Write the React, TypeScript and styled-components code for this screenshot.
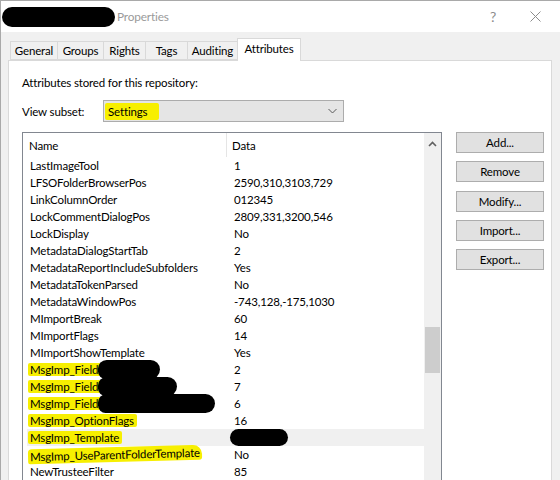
import React from "react";
import styled, { createGlobalStyle } from "styled-components";

const GlobalStyle = createGlobalStyle`
  html, body {
    margin: 0;
    padding: 0;
    background: #f0f0f0;
  }
  body {
    font-family: Lato, "Noto Sans", sans-serif;
    font-size: 11.5px;
    letter-spacing: -0.15px;
    color: #000;
  }
`;

const MARKER = "#f7ef00";

const Window = styled.div`
  width: 560px;
  height: 480px;
  box-sizing: border-box;
  overflow: hidden;
  display: flex;
  flex-direction: column;
  background: #f0f0f0;
  border-top: 1px solid #a9a9a9;
  border-left: 1px solid #a9a9a9;
`;

const TitleBar = styled.div`
  height: 31px;
  flex-shrink: 0;
  display: flex;
  align-items: center;
  background: #fff;
  padding-left: 1px;
`;

const Redact = styled.span<{ $w: number; $h?: number; $r?: string; $shift?: number }>`
  display: inline-block;
  width: ${(p) => p.$w}px;
  height: ${(p) => p.$h ?? 18}px;
  margin-left: ${(p) => p.$shift ?? 0}px;
  background: #000;
  border-radius: ${(p) => p.$r ?? "10px"};
  vertical-align: middle;
  flex-shrink: 0;
`;

const TitleText = styled.span`
  margin-left: 2px;
  font-size: 11.8px;
  color: #9a9a9a;
`;

const TitleButtons = styled.div`
  margin-left: auto;
  display: flex;
  align-items: center;
  gap: 34px;
  padding-right: 19px;
  color: #8c8c8c;
`;

const HelpGlyph = styled.span`
  font-size: 14px;
  color: #8c8c8c;
`;

const Body = styled.div`
  flex: 1;
  display: flex;
  flex-direction: column;
  padding: 6px 8px 0 7px;
  min-height: 0;
`;

const TabStrip = styled.div`
  display: flex;
  align-items: flex-end;
  padding-left: 2px;
  height: 22px;
  position: relative;
  z-index: 1;
`;

const Tab = styled.div<{ $w: number; $active?: boolean }>`
  box-sizing: border-box;
  width: ${(p) => p.$w}px;
  height: ${(p) => (p.$active ? 23 : 19)}px;
  margin-bottom: ${(p) => (p.$active ? -1 : 0)}px;
  display: flex;
  align-items: center;
  justify-content: center;
  padding-bottom: ${(p) => (p.$active ? 3 : 0)}px;
  background: ${(p) => (p.$active ? "#fff" : "#f0f0f0")};
  border: 1px solid #d9d9d9;
  border-bottom: ${(p) => (p.$active ? "none" : "1px solid #d9d9d9")};
  border-right: ${(p) => (p.$active ? "1px solid #d9d9d9" : "none")};
`;

const Panel = styled.div`
  flex: 1;
  background: #fff;
  border: 1px solid #d9d9d9;
  border-bottom: none;
  padding: 13px 0 0 13px;
  display: flex;
  flex-direction: column;
  min-height: 0;
`;

const Caption = styled.div`
  height: 17px;
  line-height: 17px;
`;

const SubsetRow = styled.div`
  display: flex;
  align-items: center;
  margin-top: 9px;
  height: 22px;
`;

const SubsetLabel = styled.span`
  width: 81px;
`;

const Combo = styled.div`
  box-sizing: border-box;
  width: 241px;
  height: 22px;
  display: flex;
  align-items: center;
  padding: 0 6px 0 1px;
  background: #e5e5e5;
  border: 1px solid #acacac;
`;

const Marked = styled.span<{ $slant?: boolean }>`
  background: ${MARKER};
  border-radius: ${(p) => (p.$slant ? "4px 9px 3px 2px" : "2px")};
  padding: ${(p) => (p.$slant ? "1px 2px 1px 2px" : "0 3px 0 2px")};
  margin-left: -2px;
  ${(p) => (p.$slant ? "transform: rotate(-1.5deg); display: inline-block;" : "")}
`;

const ComboValue = styled.span`
  flex: 1;
  span {
    padding: 2px 12px 2px 3px;
    margin-left: 0;
  }
`;

const Content = styled.div`
  display: flex;
  gap: 14px;
  margin-top: 10px;
  flex: 1;
  min-height: 0;
`;

const ListBox = styled.div`
  box-sizing: border-box;
  width: 420px;
  border: 1px solid #828790;
  border-bottom: none;
  display: flex;
  background: #fff;
`;

const ListMain = styled.div`
  flex: 1;
  display: flex;
  flex-direction: column;
`;

const HeaderRow = styled.div`
  display: flex;
  height: 24px;
  align-items: center;
`;

const HeaderCell = styled.div<{ $w?: number }>`
  box-sizing: border-box;
  ${(p) => (p.$w ? `width: ${p.$w}px;` : "flex: 1;")}
  height: 100%;
  display: flex;
  align-items: center;
  padding-left: ${(p) => (p.$w ? 6 : 5)}px;
  border-right: ${(p) => (p.$w ? "1px solid #e5e5e5" : "none")};
`;

const Rows = styled.div`
  padding-left: 4px;
  display: flex;
  flex-direction: column;
`;

const Row = styled.div<{ $selected?: boolean }>`
  display: flex;
  align-items: center;
  height: 17px;
  background: ${(p) => (p.$selected ? "#f0f0f0" : "transparent")};
  white-space: nowrap;
`;

const NameCell = styled.div`
  width: 204px;
  padding-left: 3px;
  display: flex;
  align-items: center;
  overflow: visible;
`;

const DataCell = styled.div`
  flex: 1;
  display: flex;
  align-items: center;
`;

const ScrollBar = styled.div`
  width: 17px;
  background: #f0f0f0;
  display: flex;
  flex-direction: column;
  align-items: center;
`;

const ScrollArrow = styled.div`
  height: 17px;
  display: flex;
  align-items: center;
  justify-content: center;
  margin-top: 2px;
`;

const ScrollThumb = styled.div`
  width: 15px;
  height: 46px;
  background: #cdcdcd;
  margin-top: 175px;
`;

const ButtonColumn = styled.div`
  display: flex;
  flex-direction: column;
  gap: 8.3px;
`;

const Button = styled.div`
  box-sizing: border-box;
  width: 88px;
  height: 21px;
  display: flex;
  align-items: center;
  justify-content: center;
  background: #e1e1e1;
  border: 1px solid #adadad;
`;

type Attr = {
  name: string;
  data?: string;
  mark?: "plain" | "slant";
  nameBlob?: number;
  dataBlob?: number;
  selected?: boolean;
};

const attributes: Attr[] = [
  { name: "LastImageTool", data: "1" },
  { name: "LFSOFolderBrowserPos", data: "2590,310,3103,729" },
  { name: "LinkColumnOrder", data: "012345" },
  { name: "LockCommentDialogPos", data: "2809,331,3200,546" },
  { name: "LockDisplay", data: "No" },
  { name: "MetadataDialogStartTab", data: "2" },
  { name: "MetadataReportIncludeSubfolders", data: "Yes" },
  { name: "MetadataTokenParsed", data: "No" },
  { name: "MetadataWindowPos", data: "-743,128,-175,1030" },
  { name: "MImportBreak", data: "60" },
  { name: "MImportFlags", data: "14" },
  { name: "MImportShowTemplate", data: "Yes" },
  { name: "MsgImp_Field", data: "2", mark: "plain", nameBlob: 62 },
  { name: "MsgImp_Field", data: "7", mark: "plain", nameBlob: 79 },
  { name: "MsgImp_Field", data: "6", mark: "plain", nameBlob: 117 },
  { name: "MsgImp_OptionFlags", data: "16", mark: "plain" },
  { name: "MsgImp_Template", mark: "plain", dataBlob: 58, selected: true },
  { name: "MsgImp_UseParentFolderTemplate", data: "No", mark: "slant" },
  { name: "NewTrusteeFilter", data: "85" },
];

const tabs = [
  { label: "General", w: 47 },
  { label: "Groups", w: 46 },
  { label: "Rights", w: 42 },
  { label: "Tags", w: 42 },
  { label: "Auditing", w: 50 },
  { label: "Attributes", w: 64, active: true },
];

const CloseIcon = () => (
  <svg width="11" height="11" viewBox="0 0 11 11">
    <path d="M0.5 0.5 L10.5 10.5 M10.5 0.5 L0.5 10.5" stroke="#8c8c8c" strokeWidth="1" />
  </svg>
);

const Chevron = ({ up }: { up?: boolean }) => (
  <svg width="9" height="6" viewBox="0 0 9 6">
    <path
      d={up ? "M1 5 L4.5 1.5 L8 5" : "M0.5 1 L4.5 5 L8.5 1"}
      stroke={up ? "#606060" : "#5a5a5a"}
      strokeWidth={up ? 1.6 : 1}
      fill="none"
    />
  </svg>
);

const AttrRow = ({ a }: { a: Attr }) => (
  <Row $selected={a.selected}>
    <NameCell>
      {a.mark ? <Marked $slant={a.mark === "slant"}>{a.name}</Marked> : a.name}
      {a.nameBlob && <Redact $w={a.nameBlob} $h={19} $r="9px 10px 10px 8px" $shift={-3} />}
    </NameCell>
    <DataCell>
      {a.dataBlob ? <Redact $w={a.dataBlob} $h={17} $r="9px" $shift={-4} /> : a.data}
    </DataCell>
  </Row>
);

export default function App() {
  return (
    <>
      <GlobalStyle />
      <Window>
        <TitleBar>
          <Redact $w={113} $h={20} $r="11px" />
          <TitleText>Properties</TitleText>
          <TitleButtons>
            <HelpGlyph>?</HelpGlyph>
            <CloseIcon />
          </TitleButtons>
        </TitleBar>
        <Body>
          <TabStrip>
            {tabs.map((t) => (
              <Tab key={t.label} $w={t.w} $active={t.active}>
                {t.label}
              </Tab>
            ))}
          </TabStrip>
          <Panel>
            <Caption>Attributes stored for this repository:</Caption>
            <SubsetRow>
              <SubsetLabel>View subset:</SubsetLabel>
              <Combo>
                <ComboValue>
                  <Marked>Settings</Marked>
                </ComboValue>
                <Chevron />
              </Combo>
            </SubsetRow>
            <Content>
              <ListBox>
                <ListMain>
                  <HeaderRow>
                    <HeaderCell $w={204}>Name</HeaderCell>
                    <HeaderCell>Data</HeaderCell>
                  </HeaderRow>
                  <Rows>
                    {attributes.map((a, i) => (
                      <AttrRow key={i} a={a} />
                    ))}
                  </Rows>
                </ListMain>
                <ScrollBar>
                  <ScrollArrow>
                    <Chevron up />
                  </ScrollArrow>
                  <ScrollThumb />
                </ScrollBar>
              </ListBox>
              <ButtonColumn>
                <Button>Add...</Button>
                <Button>Remove</Button>
                <Button>Modify...</Button>
                <Button>Import...</Button>
                <Button>Export...</Button>
              </ButtonColumn>
            </Content>
          </Panel>
        </Body>
      </Window>
    </>
  );
}
